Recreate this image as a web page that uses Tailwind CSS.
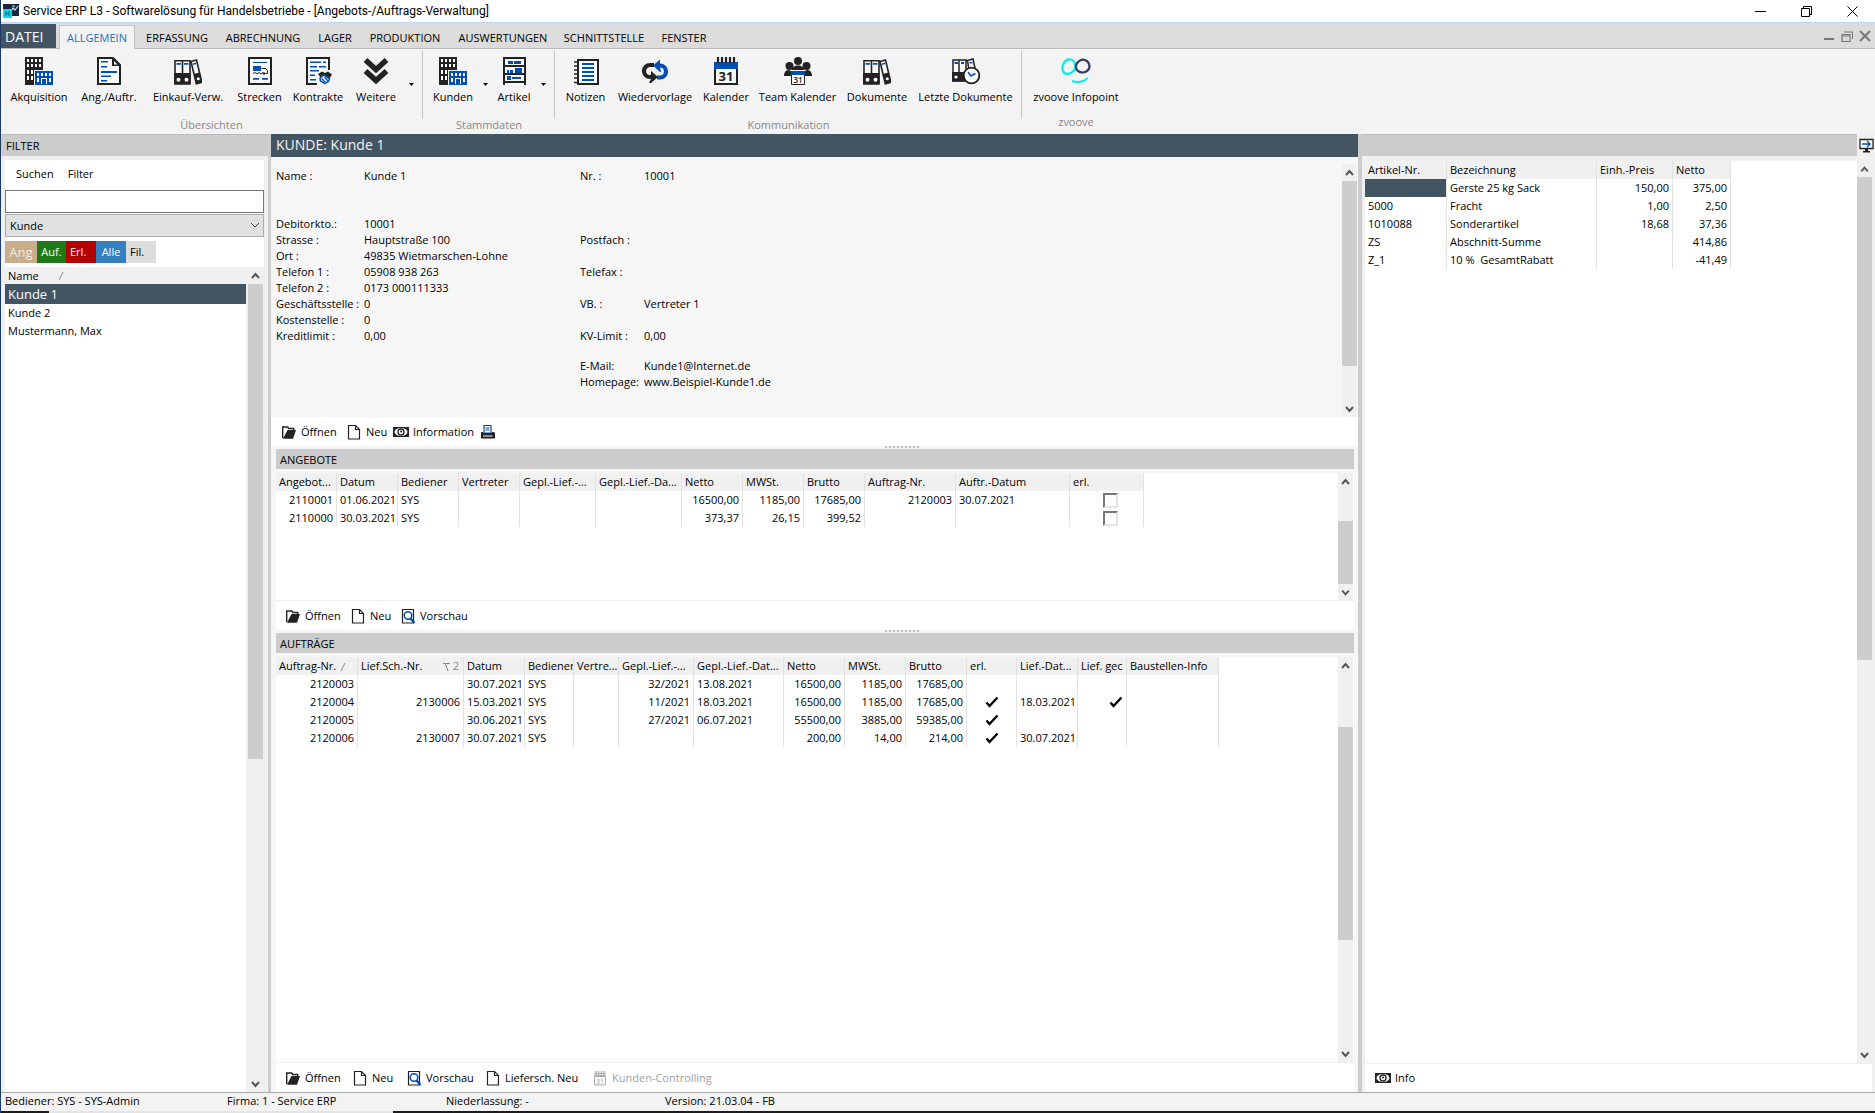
<!DOCTYPE html>
<html lang="de">
    <head>
        <meta charset="UTF-8">
        <title>Service ERP L3</title>
        <script src="https://cdn.jsdelivr.net/npm/@tailwindcss/browser@4"></script>
    </head>
    <body class="font-['Open_Sans',sans-serif] text-[11px] leading-4 text-black bg-[#f3f3f3]">
        <!-- icons -->
        <svg class="hidden">
            <symbol id="i-building" viewBox="0 0 28 28">
                <path fill="#222" d="M0 0h18v28H0z"/>
                <path fill="#fff" d="M2 2h2v3H2zM6 2h2v3H6zM10 2h2v3h-2zM14 2h2v3h-2zM2 7h2v3H2zM6 7h2v3H6zM10 7h2v3h-2zM14 7h2v3h-2zM2 13h2v4H2zM6 13h2v4H6zM10 13h2v3h-2zM2 19h2v4H2zM6 19h2v4H6z"/>
                <path fill="#f3f3f3" d="M9 13h19v15H9z"/>
                <path fill="#0050b4" d="M10 14h18v14H10z"/>
                <path fill="#fff" d="M12 16h2v3h-2zM16 16h2v3h-2zM20 16h2v3h-2zM24 16h2v3h-2zM12 21h2v4h-2zM24 21h2v4h-2zM16 21h6v1h-6zM16 22h1v5h-1zM21 22h1v5h-1z"/>
            </symbol>
            <symbol id="i-doc" viewBox="0 0 28 28">
                <path fill="#f8f8f8" stroke="#222" stroke-width="2" d="M3 1h15l7 7v19H3z"/>
                <path fill="#222" d="M17 0l9 9h-9z"/><path fill="#fff" d="M19 4l3.500 3.500H19z"/>
                <path fill="#0050b4" d="M6 4h7v1.500H6zM6 9h6v1.500H6zM6 14h16v2H6zM6 18.500h10v1.500H6zM6 23h6v1.500H6z"/>
            </symbol>
            <symbol id="i-binders" viewBox="0 0 28 28">
                <path fill="#f8f8f8" stroke="#222" stroke-width="1.600" d="M1 3.800h7.500v23H1zM8.500 3.800H16v23H8.500z"/>
                <path fill="#222" d="M0 16h16.500v11.500H0z"/>
                <path fill="#f8f8f8" stroke="#222" stroke-width="1.600" d="M17 4.500l5.500-1.500 5.300 22-5.500 1.700z"/>
                <path fill="#222" d="M20 17l5.500-1.500 2.500 10.500-5.500 1.500z"/>
                <path fill="#0050b4" d="M2.500 6h4.500v1.800H2.500zM10 6h4.500v1.800H10zM18.800 6.500l3.200-1 .4 1.500-3.200 1z"/>
                <circle cx="4.500" cy="22.800" r="2" fill="#fff"/><circle cx="12.500" cy="22.800" r="2" fill="#fff"/><circle cx="24.300" cy="21.800" r="1.500" fill="#fff"/>
            </symbol>
            <symbol id="i-route" viewBox="0 0 28 28">
                <path fill="#f8f8f8" stroke="#222" stroke-width="2" d="M3 1h22v26H3z"/>
                <path fill="#0050b4" d="M7 5h14v1H7zM7 9h8v5H7zM7 21h6v1.800H7zM16 21h6v1.800h-6z"/>
                <path fill="none" stroke="#222" d="M15.500 11.500h4l2 2v3h-2M7 16.500l2-1 2 1.500 2-1.500 2 1.500 2-1.500"/>
                <circle cx="18" cy="16.500" r="1.300" fill="#222"/>
            </symbol>
            <symbol id="i-contract" viewBox="0 0 28 28">
                <path fill="#f8f8f8" d="M2 1h22v15l-12 11H2z"/>
                <path fill="none" stroke="#222" stroke-width="2" d="M13 27H3V1h22v12"/>
                <path fill="#0050b4" d="M6 4.500h11v1.500H6zM19 4.500h3v1.500h-3zM6 9h7v1.500H6zM15 9h7v1.500h-7zM6 13h9v1.500H6zM6 17.500h5v1.500H6zM6 22h6v1.500H6z"/>
                <path fill="#222" d="M14 17l4-2.500 3 1.500 3-1.500 4 3-2.500 4-4.500-3-4.500 2z"/>
                <path fill="#f8f8f8" stroke="#0050b4" stroke-width="1.500" d="M16 21l4-3 5.500 3.500-1 3-4 2-4-2.500z"/>
                <path stroke="#0050b4" stroke-width="1.200" d="M17.500 21.500l4 4M20.500 20l3.500 4"/>
            </symbol>
            <symbol id="i-more" viewBox="0 0 28 28">
                <path fill="none" stroke="#222" stroke-width="5.500" d="M3.500 3l10.500 9.500L24.500 3M3.500 14l10.500 9.500L24.500 14"/>
            </symbol>
            <symbol id="i-article" viewBox="0 0 28 28">
                <path fill="#222" d="M3 0h23v28H3z"/><path fill="#f8f8f8" d="M5 2h19v6H5zM5 10h19v6H5zM5 18h19v6H5zM5 26h19v2H5z"/>
                <path fill="#0050b4" d="M8 4h5v3H8zM14 4h7v3h-7zM7 13h2v3H7zM10 13h3v3h-3zM15 11h7v5h-7zM7 19h4v4H7zM12 20h9v2h-9z"/>
            </symbol>
            <symbol id="i-notes" viewBox="0 0 28 28">
                <path fill="#f8f8f8" stroke="#222" stroke-width="2" d="M6 3h20v24H6z"/>
                <path stroke="#222" stroke-width="1.500" d="M2 5h4M2 9h4M2 13h4M2 17h4M2 21h4M2 25.500h4"/>
                <path fill="#0050b4" d="M10 6h12v2H10zM10 10h12v2H10zM10 14h12v2H10zM10 18h12v2H10zM10 22h12v2H10z"/>
            </symbol>
            <symbol id="i-repeat" viewBox="0 0 28 28">
                <path fill="none" stroke="#222" stroke-width="4.200" d="M13 8H9a5.700 5.700 0 0 0 0 12h4"/>
                <path fill="#222" d="M10 14l7 6-7 6H8l2-4z"/>
                <path fill="none" stroke="#0050b4" stroke-width="4.200" d="M16 20.500h3a5.700 5.700 0 0 0 0-12h-3"/>
                <path fill="#0050b4" d="M19 2.500l-7 6 7 6.500h1l-1-5V7z"/>
            </symbol>
            <symbol id="i-cal" viewBox="0 0 28 28">
                <path fill="#f8f8f8" stroke="#222" stroke-width="2" d="M3 12v15h22V12"/>
                <path fill="#0050b4" d="M2 5h24v7H2z"/>
                <path stroke="#222" stroke-width="2.200" d="M6 0v6M10 0v6M14 0v6M18 0v6M22 0v6"/>
                <text x="14" y="24" text-anchor="middle" font-size="13" font-weight="700" fill="#222">31</text>
            </symbol>
            <symbol id="i-team" viewBox="0 0 28 28">
                <g fill="#222"><circle cx="14" cy="4" r="4"/><circle cx="5.500" cy="9" r="4"/><circle cx="22.500" cy="9" r="4"/>
                <path d="M8 13c0-6 12-6 12 0zM0 19c0-7 7-7 7-4v4zM28 19c0-7-7-7-7-4v4z"/></g>
                <path fill="#fff" stroke="#222" d="M7.500 14.500h13v13h-13z"/><path fill="#0050b4" d="M7 14h14v4H7z"/>
                <text x="14" y="26" text-anchor="middle" font-size="8" font-weight="600" fill="#222">31</text>
            </symbol>
            <symbol id="i-recent" viewBox="0 0 28 28">
                <path fill="#f8f8f8" stroke="#222" stroke-width="1.500" d="M1 3h6v21H1zM7 3h7v21H7zM15.500 3.500l5.500-1.500 2 9-6 2z"/>
                <path fill="#222" d="M0 15h13v9.500H0z"/>
                <path fill="#0050b4" d="M2.500 5H6v2H2.500zM9 5h3v2H9zM17.500 5h3v1.500h-3z"/>
                <circle cx="4" cy="20" r="1.600" fill="#fff"/>
                <circle cx="19.500" cy="18.500" r="7.800" fill="#fff" stroke="#222" stroke-width="1.800"/>
                <path fill="none" stroke="#0050b4" stroke-width="1.500" d="M16 15l3 4 4.500-2.500"/>
            </symbol>
            <symbol id="i-zvoove" viewBox="0 0 32 28">
                <path fill="none" stroke="#0ee" stroke-width="2.200" d="M11 2.500C5 1 1 9 3 14s10 3 12-3c1-4-1-8-4-8.500z"/>
                <path fill="none" stroke="#333d5c" stroke-width="2.200" d="M25 3c-5-2-10 4-9 8s7 6 11 3 3-9-2-11z"/>
                <path fill="none" stroke="#0ee" stroke-width="2" d="M12 24c6 2 11 1 16-3"/>
            </symbol>
            <symbol id="i-open" viewBox="0 0 16 16">
                <path fill="none" stroke="#222" stroke-width="1.400" d="M1.700 14V3h5l1 1.500h5V7"/>
                <path fill="#222" d="M2 14.700L6.500 6H15l-3 8.700z"/>
            </symbol>
            <symbol id="i-new" viewBox="0 0 16 16">
                <path fill="#fff" stroke="#222" stroke-width="1.200" d="M2.500 1.500h7l4 4v9.500h-11z"/><path fill="none" stroke="#222" stroke-width="1.200" d="M9.500 1.500v4h4"/>
            </symbol>
            <symbol id="i-info" viewBox="0 0 16 16">
                <path fill="#222" d="M0 3h16v10H0z"/><ellipse cx="8" cy="8" rx="6.500" ry="4" fill="#fff"/>
                <circle cx="8" cy="8" r="3" fill="none" stroke="#222" stroke-width="1.300"/><circle cx="8" cy="7.500" r="1" fill="#222"/>
            </symbol>
            <symbol id="i-print" viewBox="0 0 16 16">
                <path fill="#fff" stroke="#0050a0" stroke-width="1.200" d="M4 1.500h7V9H4z"/><path stroke="#0050a0" d="M5.500 4h4M5.500 6h4"/>
                <path fill="#222" d="M1 8h2v1h9V8h2l1 1v5.500H1z"/><path fill="#fff" d="M3 11.500h9.500v1H3z"/>
            </symbol>
            <symbol id="i-preview" viewBox="0 0 16 16">
                <path fill="#fff" stroke="#222" stroke-width="1.200" d="M2.500 1.500h11V15h-11z"/>
                <circle cx="8" cy="7.500" r="3.800" fill="#fff" stroke="#0050b4" stroke-width="1.500"/><path stroke="#0050b4" stroke-width="2.400" d="M10.500 10.500l4 4.500"/>
            </symbol>
            <symbol id="i-calgray" viewBox="0 0 16 16">
                <path fill="none" stroke="#aaa" d="M2.500 6.500h11v8.500h-11z"/><path stroke="#aaa" stroke-width="1.200" d="M2 5.500h12M2 3.500h12M4 1v4M6.500 1v4M9.500 1v4M12 1v4"/>
                <text x="8" y="14" text-anchor="middle" font-size="7" fill="#999">31</text>
            </symbol>
            <symbol id="i-up" viewBox="0 0 15 17"><path fill="none" stroke="#555" stroke-width="2" d="M4 11l3.500-4L11 11"/></symbol>
            <symbol id="i-down" viewBox="0 0 15 17"><path fill="none" stroke="#555" stroke-width="2" d="M4 7l3.500 4L11 7"/></symbol>
            <symbol id="i-check" viewBox="0 0 14 12"><path fill="none" stroke="#000" stroke-width="2.400" d="M1.500 6.500l3 3.500L12.500 1.500"/></symbol>
        </svg>

        <div class="flex flex-col h-screen overflow-hidden border-l border-[#1c3c66]">
            <!-- title bar -->
            <header class="flex items-center h-[23px] shrink-0 bg-white border-b border-[#bcd6fb] pl-0.5">
                <svg class="size-4 mr-1" viewBox="0 0 16 16"><path fill="#14283c" d="M0 1h16v12H0z"/><path stroke="#cde" stroke-width="1.200" fill="none" d="M7 10l3-5 2 2 3-4M9 3h3"/><path fill="#12d4e8" d="M0 6h9v9H0z"/><path stroke="#067" d="M3 8v5M6 8v5M3 10.500h3"/></svg>
                <h1 class="flex-1 font-[Roboto,sans-serif] text-xs">Service ERP L3 - Softwarelösung für Handelsbetriebe - [Angebots-/Auftrags-Verwaltung]</h1>
                <div class="flex gap-[35px] pr-[17px]">
                    <button aria-label="Minimieren"><svg class="size-[11px]" viewBox="0 0 11 11"><path stroke="#000" d="M0 5.500h11"/></svg></button>
                    <button aria-label="Verkleinern"><svg class="size-[11px]" viewBox="0 0 11 11"><path fill="none" stroke="#000" d="M.5 2.500h8v8h-8zM2.500 2.500v-2h8v8h-2"/></svg></button>
                    <button aria-label="Schließen"><svg class="size-[11px]" viewBox="0 0 11 11"><path stroke="#000" d="M.5.5l10 10M10.500.5l-10 10"/></svg></button>
                </div>
            </header>

            <!-- ribbon tabs -->
            <nav class="flex items-end h-[26px] shrink-0 bg-[#dcdcdc] border-b border-[#bbb]">
                <button class="w-[55px] h-6 pt-0.5 bg-[#435463] text-white text-sm text-left pl-1">DATEI</button>
                <button class="ml-[3px] w-[76px] h-6 pt-px -mb-px bg-[#f3f3f3] border border-b-0 border-[#c4c4c4] text-[#1a70c0]">ALLGEMEIN</button>
                <button class="h-6 pt-1 w-[84px]">ERFASSUNG</button>
                <button class="h-6 pt-1 w-[88px]">ABRECHNUNG</button>
                <button class="h-6 pt-1 w-14">LAGER</button>
                <button class="h-6 pt-1 w-[84px]">PRODUKTION</button>
                <button class="h-6 pt-1 w-28">AUSWERTUNGEN</button>
                <button class="h-6 pt-1 w-[90px]">SCHNITTSTELLE</button>
                <button class="h-6 pt-1 w-[70px]">FENSTER</button>
                <div class="ml-auto flex items-center gap-1.5 h-6 pr-1">
                    <button aria-label="Fenster minimieren"><svg class="size-3" viewBox="0 0 12 12"><path stroke="#777" stroke-width="2" d="M1 9h10"/></svg></button>
                    <button aria-label="Fenster verkleinern"><svg class="size-3" viewBox="0 0 12 12"><path fill="none" stroke="#777" stroke-width="1.200" d="M1 4.500h8v7H1zM1 6h8M3 2h8.500v7"/></svg></button>
                    <button aria-label="Fenster schließen"><svg class="size-3" viewBox="0 0 12 12"><path stroke="#777" stroke-width="2" d="M1 1l10 10M11 1L1 11"/></svg></button>
                </div>
            </nav>

            <!-- ribbon -->
            <div class="flex h-[85px] shrink-0 pt-0.5">
                <section class="flex flex-col border-r border-[#c4c4c4] h-[68px] pt-1.5 pl-[3px] pr-[3px]">
                    <div class="flex">
                        <button class="w-[70px] flex flex-col items-center gap-1"><svg class="size-7"><use href="#i-building"/></svg>Akquisition</button>
                        <button class="w-[70px] flex flex-col items-center gap-1"><svg class="size-7"><use href="#i-doc"/></svg>Ang./Auftr.</button>
                        <button class="w-[88px] flex flex-col items-center gap-1"><svg class="size-7"><use href="#i-binders"/></svg>Einkauf-Verw.</button>
                        <button class="w-[55px] flex flex-col items-center gap-1"><svg class="size-7"><use href="#i-route"/></svg>Strecken</button>
                        <button class="w-[62px] flex flex-col items-center gap-1"><svg class="size-7"><use href="#i-contract"/></svg>Kontrakte</button>
                        <button class="w-[54px] flex flex-col items-center gap-1"><svg class="size-7"><use href="#i-more"/></svg>Weitere</button>
                        <button class="w-4 flex justify-center pt-[26px]" aria-label="Weitere Übersichten"><svg class="w-[5px] h-[3px]" viewBox="0 0 5 3"><path d="M0 0h5L2.500 3z"/></svg></button>
                    </div>
                    <h2 class="text-center text-[#888] mt-3">Übersichten</h2>
                </section>
                <section class="flex flex-col border-r border-[#c4c4c4] h-[68px] pt-1.5 pl-[5px] pr-1">
                    <div class="flex">
                        <button class="w-[50px] flex flex-col items-center gap-1"><svg class="size-7"><use href="#i-building"/></svg>Kunden</button>
                        <button class="w-3.5 flex justify-center pt-[26px]" aria-label="Weitere Kunden"><svg class="w-[5px] h-[3px]" viewBox="0 0 5 3"><path d="M0 0h5L2.500 3z"/></svg></button>
                        <button class="w-11 flex flex-col items-center gap-1"><svg class="size-7"><use href="#i-article"/></svg>Artikel</button>
                        <button class="w-3.5 flex justify-center pt-[26px]" aria-label="Weitere Artikel"><svg class="w-[5px] h-[3px]" viewBox="0 0 5 3"><path d="M0 0h5L2.500 3z"/></svg></button>
                    </div>
                    <h2 class="text-center text-[#888] mt-3">Stammdaten</h2>
                </section>
                <section class="flex flex-col border-r border-[#c4c4c4] h-[68px] pt-1.5 pl-1 pr-[3px]">
                    <div class="flex">
                        <button class="w-[53px] flex flex-col items-center gap-1"><svg class="size-7"><use href="#i-notes"/></svg>Notizen</button>
                        <button class="w-[86px] flex flex-col items-center gap-1"><svg class="size-7"><use href="#i-repeat"/></svg>Wiedervorlage</button>
                        <button class="w-[56px] flex flex-col items-center gap-1"><svg class="size-7"><use href="#i-cal"/></svg>Kalender</button>
                        <button class="w-[87px] flex flex-col items-center gap-1"><svg class="size-7"><use href="#i-team"/></svg>Team Kalender</button>
                        <button class="w-[72px] flex flex-col items-center gap-1"><svg class="size-7"><use href="#i-binders"/></svg>Dokumente</button>
                        <button class="w-[105px] flex flex-col items-center gap-1"><svg class="size-7"><use href="#i-recent"/></svg>Letzte Dokumente</button>
                    </div>
                    <h2 class="text-center text-[#888] mt-3">Kommunikation</h2>
                </section>
                <section class="flex flex-col h-[68px] pt-1.5">
                    <button class="w-[108px] flex flex-col items-center gap-1"><svg class="w-8 h-7"><use href="#i-zvoove"/></svg>zvoove Infopoint</button>
                    <h2 class="text-center text-[#888] mt-[9px]">zvoove</h2>
                </section>
            </div>

            <main class="flex flex-1 min-h-0">
                <!-- filter panel -->
                <aside class="w-[270px] shrink-0 flex flex-col bg-[#f0f0f0] border-r-[3px] border-[#ccc]">
                    <h2 class="h-[22px] shrink-0 bg-[#ccc] border-t border-[#bbb] pl-[5px] pt-[3px]">FILTER</h2>
                    <div class="ml-1 mr-1 mt-1 bg-white">
                        <div class="flex h-[30px] items-center pl-[11px] pb-0.5 gap-3.5"><button>Suchen</button><button>Filter</button></div>
                        <input type="text" aria-label="Suchbegriff" class="block w-full h-[23px] bg-white border border-[#777] px-1">
                        <div class="relative mt-px">
                            <select aria-label="Suche nach" class="block appearance-none w-full h-[23px] bg-[#e1e1e1] border border-[#adadad] pl-1"><option>Kunde</option></select>
                            <svg class="absolute right-1 top-2 w-[10px] h-[7px] pointer-events-none" viewBox="0 0 10 7"><path fill="none" stroke="#444" d="M1 1l4 4 4-4"/></svg>
                        </div>
                        <div class="flex h-[30px] pt-1">
                            <button class="w-8 h-[22px] bg-[#c8ad8a] text-[#f4ece0] text-[13px]">Ang</button>
                            <button class="w-[29px] h-[22px] bg-[#1e7a14] text-white">Auf.</button>
                            <button class="w-[30px] h-[22px] bg-[#b30000] text-white text-left pl-1">Erl.</button>
                            <button class="w-[30px] h-[22px] bg-[#3380bd] text-white">Alle</button>
                            <button class="w-[30px] h-[22px] bg-[#dcdcdc] text-left pl-1">Fil.</button>
                        </div>
                    </div>
                    <div class="flex flex-1 min-h-0 ml-1 mr-[5px] bg-white">
                        <table class="flex-1 self-start table-fixed border-collapse">
                            <thead><tr class="h-[17px] bg-[#f0f0f0]"><th class="font-normal text-left pl-[3px]"><span class="inline-flex items-center">Name<svg class="ml-5 w-2 h-2" viewBox="0 0 8 8"><path stroke="#888" d="M0 8l4-8"/></svg></span></th></tr></thead>
                            <tbody>
                                <tr class="h-5 bg-[#435463] text-white text-[13px]"><td class="pl-[3px]">Kunde 1</td></tr>
                                <tr class="h-[18px]"><td class="pl-[3px]">Kunde 2</td></tr>
                                <tr class="h-[18px]"><td class="pl-[3px]">Mustermann, Max</td></tr>
                            </tbody>
                        </table>
                        <div class="w-[17px] flex flex-col bg-[#f0f0f0] pl-0.5">
                            <svg class="w-[15px] h-[17px]"><use href="#i-up"/></svg>
                            <div class="h-[475px] bg-[#cdcdcd]"></div>
                            <svg class="w-[15px] h-[17px] mt-auto"><use href="#i-down"/></svg>
                        </div>
                    </div>
                </aside>

                <!-- customer -->
                <div class="flex-1 min-w-0 flex flex-col bg-[#f6f6f6]">
                    <h2 class="h-[23px] shrink-0 bg-[#435463] text-[#f4f4f4] text-sm leading-[22px] pl-[5px]">KUNDE: Kunde 1</h2>
                    <div class="flex h-[260px] shrink-0 pt-[7px]">
                        <dl class="grid grid-cols-[88px_216px] content-start pl-[5px] pt-1">
                            <dt class="h-12">Name :</dt><dd>Kunde 1</dd>
                            <dt>Debitorkto.:</dt><dd>10001</dd>
                            <dt>Strasse :</dt><dd>Hauptstraße 100</dd>
                            <dt>Ort :</dt><dd>49835 Wietmarschen-Lohne</dd>
                            <dt>Telefon 1 :</dt><dd>05908 938 263</dd>
                            <dt>Telefon 2 :</dt><dd>0173 000111333</dd>
                            <dt class="whitespace-nowrap">Geschäftsstelle :</dt><dd>0</dd>
                            <dt>Kostenstelle :</dt><dd>0</dd>
                            <dt>Kreditlimit :</dt><dd>0,00</dd>
                        </dl>
                        <dl class="flex-1 grid grid-cols-[64px_1fr] content-start pt-1">
                            <dt class="h-16">Nr. :</dt><dd>10001</dd>
                            <dt class="h-8">Postfach :</dt><dd></dd>
                            <dt class="h-8">Telefax :</dt><dd></dd>
                            <dt class="h-8">VB. :</dt><dd>Vertreter 1</dd>
                            <dt class="h-[30px]">KV-Limit :</dt><dd>0,00</dd>
                            <dt>E-Mail:</dt><dd>Kunde1@Internet.de</dd>
                            <dt>Homepage:</dt><dd>www.Beispiel-Kunde1.de</dd>
                        </dl>
                        <div class="w-[15px] mr-px flex flex-col bg-[#f0f0f0]">
                            <svg class="w-[15px] h-[17px]"><use href="#i-up"/></svg>
                            <div class="h-[185px] bg-[#cdcdcd]"></div>
                            <svg class="w-[15px] h-[17px] mt-auto"><use href="#i-down"/></svg>
                        </div>
                    </div>
                    <div class="flex items-center h-[29px] shrink-0 bg-white pl-2.5">
                        <button class="flex items-center gap-1 w-[65px]"><svg class="size-4"><use href="#i-open"/></svg>Öffnen</button>
                        <button class="flex items-center gap-1 w-[47px]"><svg class="size-4"><use href="#i-new"/></svg>Neu</button>
                        <button class="flex items-center gap-1 w-[87px]"><svg class="size-4"><use href="#i-info"/></svg>Information</button>
                        <button aria-label="Drucken"><svg class="size-4"><use href="#i-print"/></svg></button>
                    </div>
                    <div class="h-[3px] shrink-0 pl-[58%]"><div class="w-[34px] -ml-4 border-t-2 border-dotted border-[#bbb]"></div></div>

                    <!-- offers -->
                    <section class="flex flex-col shrink-0 h-[181px] pl-[5px] pr-1">
                        <h2 class="h-5 shrink-0 bg-[#ccc] pl-1 pt-[3px] mb-1">ANGEBOTE</h2>
                        <div class="flex h-[128px] shrink-0 bg-white border-b border-[#eee]">
                            <table class="self-start table-fixed border-separate border-spacing-0 w-[868px]" id="angebote"></table>
                            <div class="ml-auto w-[15px] mr-px flex flex-col bg-[#f0f0f0]">
                                <svg class="w-[15px] h-[17px]"><use href="#i-up"/></svg>
                                <div class="mt-[31px] h-[63px] bg-[#cdcdcd]"></div>
                                <svg class="w-[15px] h-4"><use href="#i-down"/></svg>
                            </div>
                        </div>
                        <div class="flex items-center flex-1 bg-white pl-[9px]">
                            <button class="flex items-center gap-1 w-[65px]"><svg class="size-4"><use href="#i-open"/></svg>Öffnen</button>
                            <button class="flex items-center gap-1 w-[50px]"><svg class="size-4"><use href="#i-new"/></svg>Neu</button>
                            <button class="flex items-center gap-1"><svg class="size-4"><use href="#i-preview"/></svg>Vorschau</button>
                        </div>
                    </section>
                    <div class="h-[3px] shrink-0 pl-[58%]"><div class="w-[34px] -ml-4 border-t-2 border-dotted border-[#bbb]"></div></div>

                    <!-- orders -->
                    <section class="flex flex-col flex-1 min-h-0 pl-[5px] pr-1">
                        <h2 class="h-5 shrink-0 bg-[#ccc] pl-1 pt-[3px] mb-1">AUFTRÄGE</h2>
                        <div class="flex flex-1 min-h-0 bg-white border-b border-[#eee]">
                            <table class="self-start table-fixed border-separate border-spacing-0 w-[943px]" id="auftraege"></table>
                            <div class="ml-auto w-[15px] mr-px flex flex-col bg-[#f0f0f0]">
                                <svg class="w-[15px] h-[17px]"><use href="#i-up"/></svg>
                                <div class="mt-[53px] h-[213px] bg-[#cdcdcd]"></div>
                                <svg class="w-[15px] h-[17px] mt-auto"><use href="#i-down"/></svg>
                            </div>
                        </div>
                        <div class="flex items-center h-[29px] shrink-0 bg-white pl-[9px]">
                            <button class="flex items-center gap-1 w-[67px]"><svg class="size-4"><use href="#i-open"/></svg>Öffnen</button>
                            <button class="flex items-center gap-1 w-[54px]"><svg class="size-4"><use href="#i-new"/></svg>Neu</button>
                            <button class="flex items-center gap-1 w-[79px]"><svg class="size-4"><use href="#i-preview"/></svg>Vorschau</button>
                            <button class="flex items-center gap-1 w-[107px]"><svg class="size-4"><use href="#i-new"/></svg>Liefersch. Neu</button>
                            <button class="flex items-center gap-1 text-[#a0a0a0]" disabled><svg class="size-4"><use href="#i-calgray"/></svg>Kunden-Controlling</button>
                        </div>
                    </section>
                </div>

                <!-- articles -->
                <aside class="w-[517px] shrink-0 flex flex-col bg-[#f0f0f0] border-l-4 border-[#ccc]">
                    <div class="flex h-[22px] shrink-0">
                        <div class="flex-1 bg-[#ccc] border-t border-[#bbb]"></div>
                        <button class="w-[18px] flex items-center justify-center" aria-label="Anzeigen"><svg class="size-[15px]" viewBox="0 0 15 15"><path fill="#fff" stroke="#222" stroke-width="1.300" d="M1 1.500h13v9H1z"/><path fill="#222" d="M6 11h3v2h2v1.500H4V13h2z"/><path fill="none" stroke="#0050b4" stroke-width="1.400" d="M3 6h8M8 3l3 3-3 3"/></svg></button>
                    </div>
                    <div class="flex flex-1 min-h-0 mt-[5px] ml-[3px] mr-[3px] bg-white border-b border-[#eee]">
                        <table class="self-start table-fixed border-separate border-spacing-0 w-[366px]" id="artikel"></table>
                        <div class="ml-auto w-[15px] flex flex-col bg-[#f0f0f0]">
                            <svg class="w-[15px] h-4"><use href="#i-up"/></svg>
                            <div class="h-[483px] bg-[#cdcdcd]"></div>
                            <svg class="w-[15px] h-[17px] mt-auto"><use href="#i-down"/></svg>
                        </div>
                    </div>
                    <div class="flex items-center h-7 shrink-0 ml-[3px] mr-[3px] bg-white pl-[10px]">
                        <button class="flex items-center gap-1"><svg class="size-4"><use href="#i-info"/></svg>Info</button>
                    </div>
                </aside>
            </main>

            <!-- status bar -->
            <footer class="flex h-[19px] shrink-0 border-t border-[#aaa] pl-1">
                <span class="w-[222px]">Bediener: SYS - SYS-Admin</span>
                <span class="w-[219px]">Firma: 1 - Service ERP</span>
                <span class="w-[219px]">Niederlassung: -</span>
                <span>Version: 21.03.04 - FB</span>
            </footer>
            <div class="h-0.5 shrink-0 bg-[#1c1c1c]"><div class="ml-12 w-[344px] h-full bg-[#e4e4e4]"></div></div>
        </div>

        <script>
            var box = '<input type="checkbox" aria-label="erledigt" class="block ml-[30px] appearance-none size-[15px] border-2 border-t-[#777] border-l-[#777] border-r-[#e4e4e4] border-b-[#e4e4e4] bg-white">';
            var check = '<svg class="mx-auto w-3.5 h-3"><use href="#i-check"/></svg>';
            var checkRight = '<svg class="ml-auto w-3.5 h-3"><use href="#i-check"/></svg>';
            var asc = '<svg class="inline ml-1 w-2 h-2" viewBox="0 0 8 8"><path stroke="#888" d="M1 8l4-8"/></svg>';
            var desc = '<span class="float-right pr-1 text-[#888]"><svg class="inline w-2 h-2 mr-0.5" viewBox="0 0 8 8"><path fill="none" stroke="#888" d="M0 .5h7M2 0l3 8"/></svg>2</span>';

            // cols: [title, width, right aligned]
            function fill(id, cols, rows){
                var html = '<colgroup>';
                cols.forEach(function(c){ html += `<col style="width:${c[1]}px">`; });
                html += '</colgroup><thead><tr class="h-[18px] bg-[#f0f0f0]">';
                cols.forEach(function(c){
                    html += `<th class="font-normal text-left whitespace-nowrap overflow-hidden p-0 pl-[3px] border-r border-[#e2e2e2]">${c[0]}</th>`;
                });
                html += '</tr></thead><tbody>';
                rows.forEach(function(r){
                    html += '<tr class="h-[18px]">';
                    r.forEach(function(v, i){
                        var align = cols[i][2] ? "text-right" : "text-left";
                        var back = v == "SEL" ? "bg-[#435463]" : "";
                        html += `<td class="${align} ${back} whitespace-pre p-0 pl-[3px] pr-[3px] border-r border-[#e2e2e2]">${v == "SEL" ? "" : v}</td>`;
                    });
                    html += '</tr>';
                });
                document.getElementById(id).innerHTML = html + '</tbody>';
            }

            fill("angebote", [["Angebot...",61,1],["Datum",61],["Bediener",61],["Vertreter",61],["Gepl.-Lief.-...",76],["Gepl.-Lief.-Da...",86],["Netto",61,1],["MWSt.",61,1],["Brutto",61,1],["Auftrag-Nr.",91,1],["Auftr.-Datum",114],["erl.",74]], [
                ["2110001","01.06.2021","SYS","","","","16500,00","1185,00","17685,00","2120003","30.07.2021",box],
                ["2110000","30.03.2021","SYS","","","","373,37","26,15","399,52","","",box]
            ]);
            fill("auftraege", [["Auftrag-Nr." + asc,82,1],["Lief.Sch.-Nr." + desc,106,1],["Datum",61],["Bediener",49],["Vertre...",45],["Gepl.-Lief.-...",75,1],["Gepl.-Lief.-Dat...",90],["Netto",61,1],["MWSt.",61,1],["Brutto",61,1],["erl.",50],["Lief.-Dat...",61],["Lief. gec",49],["Baustellen-Info",92]], [
                ["2120003","","30.07.2021","SYS","","32/2021","13.08.2021","16500,00","1185,00","17685,00","","","",""],
                ["2120004","2130006","15.03.2021","SYS","","11/2021","18.03.2021","16500,00","1185,00","17685,00",check,"18.03.2021",checkRight,""],
                ["2120005","","30.06.2021","SYS","","27/2021","06.07.2021","55500,00","3885,00","59385,00",check,"","",""],
                ["2120006","2130007","30.07.2021","SYS","","","","200,00","14,00","214,00",check,"30.07.2021","",""]
            ]);
            fill("artikel", [["Artikel-Nr.",82],["Bezeichnung",150],["Einh.-Preis",76,1],["Netto",58,1]], [
                ["SEL","Gerste 25 kg Sack","150,00","375,00"],
                ["5000","Fracht","1,00","2,50"],
                ["1010088","Sonderartikel","18,68","37,36"],
                ["ZS","Abschnitt-Summe","","414,86"],
                ["Z_1","10 %  GesamtRabatt","","-41,49"]
            ]);
        </script>
    </body>
</html>
